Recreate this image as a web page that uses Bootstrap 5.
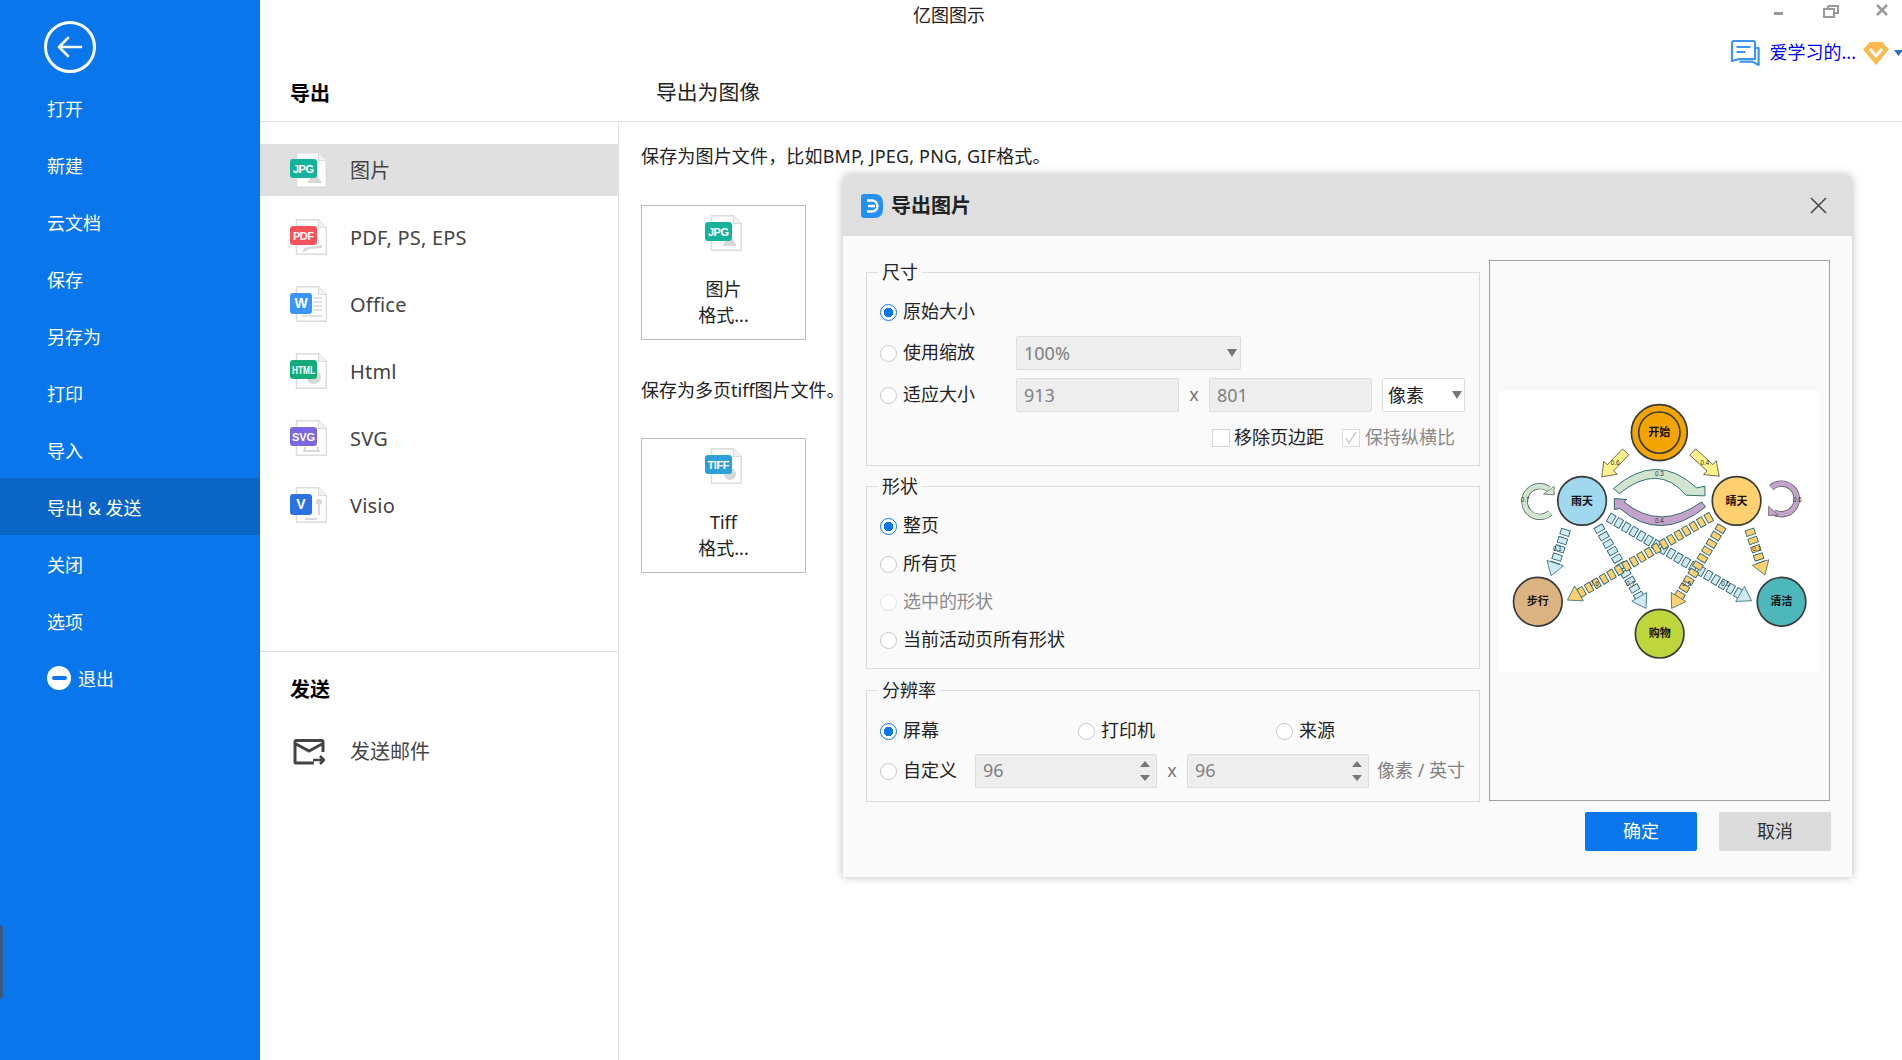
<!DOCTYPE html>
<html lang="zh-CN">
<head>
<meta charset="utf-8">
<title>亿图图示</title>
<link rel="stylesheet" href="https://cdn.jsdelivr.net/npm/bootstrap@5.3.0/dist/css/bootstrap.min.css">
<style>
html,body{height:100%;margin:0;overflow:hidden;background:#fff}
body{font-family:"Noto Sans","Noto Sans CJK SC",sans-serif;font-size:18px;color:#222;line-height:1.4}
.app-shell{position:relative;width:1902px;height:1060px;overflow:hidden}
.side-rail{width:260px;flex:0 0 260px;background:#0a76eb;color:#fff}
.back-circle{width:52px;height:52px;margin:21px 0 6px 44px;border:3px solid #fff;border-radius:50%}
.rail-item{height:57px;padding:5px 0 0 47px;font-size:18px}
.rail-item.is-on{background:#0965c6}
.exit-dot{width:24px;height:24px;border-radius:50%;background:#fff;margin-right:7px;margin-top:-5px}
.exit-dot::after{content:"";width:15px;height:4px;background:#0a76eb;border-radius:2px}
.edge-tab{position:absolute;left:-3px;top:925px;width:6px;height:74px;border:3px solid #3a5a82;border-radius:4px}
.main-pane{flex:1 1 auto;min-width:0}
.head-band{height:122px;border-bottom:1px solid #e0e0e0}
.win-row{height:30px}
.app-title{margin-left:653px;line-height:30px;font-size:18px;color:#222}
.win-ctl{position:absolute;top:0;right:0;width:140px;height:24px}
.user-row{height:40px;padding-top:6px;font-size:18px;color:#0000f0}
.user-name{margin:0 6px 0 10px}
.user-caret{margin-right:-2px}
.crumb-row{height:47px}
.crumb-a{width:396px;padding-left:30px;font-size:20px;font-weight:700;color:#000}
.crumb-b{font-size:20.8px;color:#222;margin-top:-2px}
.body-row{height:938px}
.kind-col{width:359px;flex:0 0 359px;border-right:1px solid #e0e0e0;padding-top:22px}
.kind-row{height:52px;margin-bottom:15px;padding-left:30px;font-size:20px;color:#444}
.kind-row.is-on{background:#e0e0e0}
.kind-ico{width:37px;height:36px;margin-right:23px;flex:none}
.kind-cap{padding-top:2px;letter-spacing:.2px}
.kind-rule{border-top:1px solid #e0e0e0;margin-top:120px}
.send-head{padding:24px 0 0 30px;font-size:20px;font-weight:700;color:#000;margin-bottom:28px}
.mail-row{height:40px;padding-left:33px;font-size:20px;color:#444}
.mail-ico{width:32px;height:26px;margin-right:25px;flex:none}
.out-col{padding:21px 0 0 22px;font-size:18px;color:#222}
.out-line{height:26px;line-height:26px;white-space:nowrap}
.out-wide{letter-spacing:.17px}
.fmt-box{width:165px;height:135px;margin-top:36px;border:1px solid #bdbdbd;background:#fff;padding-top:9px;font-size:18px;line-height:26px;color:#222}
.fmt-box svg{width:37px;height:36px;margin-bottom:25px}
.gap-line{margin-top:37px}
.gap-box{margin-top:35px}
.dlg-win{position:absolute;left:843px;top:175px;width:1009px;height:702px;background:#fafafa;border-radius:6px 6px 0 0;box-shadow:0 0 10px rgba(0,0,0,.28);font-size:18px;color:#222}
.dlg-head{height:61px;background:#dfdfdf;border-radius:6px 6px 0 0;padding:0 25px 0 18px;font-size:20px;font-weight:700;color:#222}
.dlg-head svg.ic-a{width:22px;height:24px;margin-right:8px}
.dlg-close{margin-left:auto;width:17px;height:17px}
.dlg-main{padding:23px 22px 0 23px}
.dlg-fields{width:614px;flex:none}
.fs-box{border:1px solid #dcdcdc;margin:0;padding:0 0 0 10px}
.fs-box legend{float:none;width:auto;margin:0 0 0 1px;padding:0 4px;font-size:18px;line-height:26px;color:#222}
.fs-two{margin-top:7px}
.fs-three{margin-top:8px}
.fs-row{height:34px;white-space:nowrap}
.r-1{margin-top:10px}
.r-g7{margin-top:7px}
.r-g8{margin-top:8px}
.r-g9{margin-top:9px}
.fs-two .fs-row{height:32px;margin-top:6px}
.fs-two .r-1{margin-top:11px}
.fs-three .r-1{margin-top:11px}
.fs-three .r-g7{margin-top:6px}
.fs-pad{height:12px}
.fs-pad10{height:10px}
.fs-pad15{height:13px}
.form-check-input.pick{width:17px;height:17px;margin:0 5px 0 3px;flex:none;border:1.5px solid #c8c8c8;background-color:#fff}
.form-check-input.pick:checked{background-color:#fff;border-color:#0a76eb;background-image:radial-gradient(circle,#0a76eb 0 4.5px,#fff 5px)}
.form-check-input.pick:disabled{opacity:1;border-color:#e2e2e2}
.pick-label{font-size:18px;color:#222;margin-left:1px}
.pick-label.is-off{color:#8a8a8a}
.fld-a{width:139px;flex:none}
.form-select.sel-off,.form-control.txt-off{background-color:#eee;border:1px solid #ddd;border-radius:2px;height:34px;padding:0 7px;font-size:18px;color:#808080;font-family:inherit;opacity:1}
.form-select.sel-off{width:225px;background-position:right 1px center;background-size:14px 10px}
.form-select.sel-lite{width:83px;height:34px;margin-left:10px;border-radius:2px;background-color:#fff;background-position:right 0 center;background-size:14px 10px;border:1px solid #ddd;padding:0 5px;font-size:18px;color:#222;font-family:inherit}
.caret-svg{background-image:url("data:image/svg+xml,%3Csvg xmlns='http://www.w3.org/2000/svg' viewBox='0 0 14 10'%3E%3Cpath fill='%23777' d='M2 1h10L7 9z'/%3E%3C/svg%3E")}
.form-control.w-size{width:163px}
.times-x{width:30px;text-align:center;color:#777}
.check-row{padding-left:335px;height:34px}
.sq-box{width:18px;height:18px;flex:none;border:1px solid #d4d4d4;background:#fff;margin-right:4px}
.sq-box.is-off{margin-left:18px;margin-right:5px;border-color:#ddd}
.col-198{width:198px;flex:none}
.spin-lead{width:98px;flex:none}
.spin-box{width:182px;height:34px;background:#eee;border:1px solid #ddd;border-radius:2px;padding:0 5px 0 7px;font-size:18px;color:#808080;flex:none}
.spin-box svg{width:12px;height:26px}
.unit-txt{margin-left:8px;color:#808080;font-size:18px}
.thumb-box{width:341px;height:541px;margin:1px 0 0 9px;border:1px solid #a0a0a0;background:#fafafa;flex:none}
.thumb-art{width:321px;height:281px;margin:130px 0 0 9px;background:#fff;display:block}
.dlg-foot{padding:10px 21px 0 0;gap:22px}
.btn.act-ok,.btn.act-no{width:112px;height:39px;padding:0;border:0;border-radius:2px;font-size:18px;line-height:39px}
.btn.act-ok{background:#0a76eb;color:#fff}
.btn.act-no{background:#dcdcdc;color:#333}
.node-t{font-family:"Noto Sans CJK SC",sans-serif;font-size:33px;font-weight:700;text-anchor:middle;fill:#111}
.edge-t{font-family:"Liberation Sans",sans-serif;font-size:19px;text-anchor:middle;fill:#333}
.bdg{font-family:"Liberation Sans",sans-serif;font-weight:700;fill:#fff;font-size:11px;text-anchor:middle}
.bdg-big{font-size:14px}
.seg-line{stroke:#1f6068;stroke-width:30;stroke-dasharray:20 6}
.seg-blue,.seg-gold{stroke-width:25;stroke-dasharray:15 11;stroke-dashoffset:-2.500}
.seg-blue{stroke:#cfeaf5}
.seg-gold{stroke:#ffd070}
</style>
</head>
<body>
<svg width="0" height="0" class="position-absolute">
  <defs>
    <symbol id="doc-sheet" viewBox="0 0 37 36">
      <path d="M6.500.7H28.500L36.300 8.500V35.300H6.500Z" fill="#fff" stroke="#dcdcdc" stroke-width="1.400"/>
      <path d="M28.500.7V8.500H36.300" fill="#f2f2f2" stroke="#dcdcdc" stroke-width="1.200"/>
    </symbol>
  </defs>
</svg>
<div class="app-shell d-flex">
  <aside class="side-rail d-flex flex-column">
    <div class="back-circle d-flex align-items-center justify-content-center">
      <svg width="26" height="22" viewBox="0 0 26 22" fill="none" stroke="#fff" stroke-width="2.600" stroke-linecap="round" stroke-linejoin="round"><path d="M11 2 2 11l9 9M2.500 11H24"/></svg>
    </div>
    <div class="rail-item d-flex align-items-center">打开</div>
    <div class="rail-item d-flex align-items-center">新建</div>
    <div class="rail-item d-flex align-items-center">云文档</div>
    <div class="rail-item d-flex align-items-center">保存</div>
    <div class="rail-item d-flex align-items-center">另存为</div>
    <div class="rail-item d-flex align-items-center">打印</div>
    <div class="rail-item d-flex align-items-center">导入</div>
    <div class="rail-item is-on d-flex align-items-center">导出 &amp; 发送</div>
    <div class="rail-item d-flex align-items-center">关闭</div>
    <div class="rail-item d-flex align-items-center">选项</div>
    <div class="rail-item d-flex align-items-center"><span class="exit-dot d-flex align-items-center justify-content-center"></span>退出</div>
  </aside>
  <div class="edge-tab"></div>
  <div class="main-pane d-flex flex-column">
    <div class="head-band">
      <div class="win-row position-relative d-flex">
        <div class="app-title">亿图图示</div>
        <svg class="win-ctl" viewBox="0 0 140 24" fill="none" stroke="#9a9a9a">
          <path d="M12 13.500h9" stroke-width="3"/>
          <path d="M66 6h10v7h-3M66 6v3" stroke-width="2"/>
          <rect x="62" y="9" width="10" height="8" stroke-width="2"/>
          <path d="M115 5l10 10M125 5l-10 10" stroke-width="2.600"/>
        </svg>
      </div>
      <div class="user-row d-flex align-items-center justify-content-end">
        <svg width="30" height="27" viewBox="0 0 30 27" fill="none" stroke="#3c96ef" stroke-width="2.200" stroke-linejoin="round"><path d="M2 3q0-2 2-2h19q2 0 2 2v16H9l-7 2z"/><path d="M6.500 7h14M6.500 12h9" /><path d="M26 8h2.600v17l-6-3.400H9.500" /></svg>
        <span class="user-name">爱学习的...</span>
        <svg width="28" height="25" viewBox="0 0 28 25"><path d="M8 1h12l7 7.500L14 24 1 8.500z" fill="#fcb94d"/><path d="M8 8l6 7 6-7" fill="none" stroke="#fff" stroke-width="3"/></svg>
        <svg width="10" height="8" viewBox="0 0 10 8" class="ms-1 user-caret"><path d="M0 1h9L4.500 7z" fill="#2a6fc0"/></svg>
      </div>
      <div class="crumb-row d-flex align-items-center">
        <div class="crumb-a">导出</div>
        <div class="crumb-b">导出为图像</div>
      </div>
    </div>
    <div class="body-row d-flex">
      <div class="kind-col">
        <div class="kind-row is-on d-flex align-items-center">
          <svg class="kind-ico" viewBox="0 0 37 36"><use href="#doc-sheet"/><path d="M17 31l8-11 7 11z" fill="#d8d8d8"/><rect y="7" width="27" height="19" rx="3" fill="#17b29c"/><text class="bdg" x="13.500" y="21" textLength="21">JPG</text></svg>
          <span class="kind-cap">图片</span>
        </div>
        <div class="kind-row d-flex align-items-center">
          <svg class="kind-ico" viewBox="0 0 37 36"><use href="#doc-sheet"/><path d="M12 33q2-5 6-5l14-2v3l-13 1q-3 3-7 3z" fill="#d8d8d8"/><rect y="7" width="27" height="19" rx="3" fill="#f9525a"/><text class="bdg" x="13.500" y="21" textLength="21">PDF</text></svg>
          <span class="kind-cap">PDF, PS, EPS</span>
        </div>
        <div class="kind-row d-flex align-items-center">
          <svg class="kind-ico" viewBox="0 0 37 36"><use href="#doc-sheet"/><path d="M23 12h9M23 16h9M23 20h9M23 24h9M12 30h20" stroke="#d8d8d8" stroke-width="1.400"/><rect y="7" width="22" height="21" rx="3" fill="#3b96fb"/><text class="bdg bdg-big" x="11" y="22">W</text></svg>
          <span class="kind-cap">Office</span>
        </div>
        <div class="kind-row d-flex align-items-center">
          <svg class="kind-ico" viewBox="0 0 37 36"><use href="#doc-sheet"/><circle cx="24" cy="24" r="7" fill="#d8d8d8"/><rect y="7" width="27" height="19" rx="3" fill="#17a97c"/><text class="bdg" x="13.500" y="21" textLength="23" lengthAdjust="spacingAndGlyphs">HTML</text></svg>
          <span class="kind-cap">Html</span>
        </div>
        <div class="kind-row d-flex align-items-center">
          <svg class="kind-ico" viewBox="0 0 37 36"><use href="#doc-sheet"/><path d="M13 31h17M15 27v4M28 27v4" stroke="#d8d8d8" stroke-width="2" fill="none"/><rect y="7" width="27" height="19" rx="3" fill="#7b68e0"/><text class="bdg" x="13.500" y="21" textLength="23">SVG</text></svg>
          <span class="kind-cap">SVG</span>
        </div>
        <div class="kind-row d-flex align-items-center">
          <svg class="kind-ico" viewBox="0 0 37 36"><use href="#doc-sheet"/><path d="M29 16v12M15 32h12" stroke="#d8d8d8" stroke-width="2"/><circle cx="29" cy="15" r="3" fill="#d8d8d8"/><rect y="7" width="22" height="21" rx="3" fill="#2a72e0"/><text class="bdg bdg-big" x="11" y="22">V</text></svg>
          <span class="kind-cap">Visio</span>
        </div>
        <div class="kind-rule"></div>
        <div class="send-head">发送</div>
        <div class="mail-row d-flex align-items-center">
          <svg class="mail-ico" viewBox="0 0 32 26" fill="none" stroke="#444" stroke-width="3"><path d="M30 13V3q0-1.500-1.500-1.500h-25Q2 1.500 2 3v20q0 1 1 1h18M3 5l13 7L29 5"/><path d="M20 21h11M27 17l4 4-4 4" stroke-width="2.600"/></svg>
          发送邮件
        </div>
      </div>
      <div class="out-col">
        <div class="out-line out-wide">保存为图片文件，比如BMP, JPEG, PNG, GIF格式。</div>
        <div class="fmt-box text-center">
          <svg viewBox="0 0 37 36" class="d-block mx-auto"><use href="#doc-sheet"/><path d="M17 31l8-11 7 11z" fill="#d8d8d8"/><rect y="7" width="27" height="19" rx="3" fill="#17b29c"/><text class="bdg" x="13.500" y="21" textLength="21">JPG</text></svg>
          图片<br>格式...
        </div>
        <div class="out-line gap-line">保存为多页tiff图片文件。</div>
        <div class="fmt-box gap-box text-center">
          <svg viewBox="0 0 37 36" class="d-block mx-auto"><use href="#doc-sheet"/><circle cx="25" cy="26" r="6" fill="#d8d8d8"/><rect y="7" width="27" height="19" rx="3" fill="#2f9fd8"/><text class="bdg" x="13.500" y="21" textLength="22">TIFF</text></svg>
          Tiff<br>格式...
        </div>
      </div>
    </div>
  </div>

  <section class="dlg-win d-flex flex-column">
    <div class="dlg-head d-flex align-items-center">
      <svg class="ic-a" viewBox="0 0 22 24"><path d="M3 0h10q9 0 9 9v6q0 9-9 9H3q-3 0-3-3V3q0-3 3-3z" fill="#2490f5"/><path d="M6 6.500h5a5.500 5.500 0 0 1 0 11H6M7 12h7" fill="none" stroke="#fff" stroke-width="2.400"/></svg>
      导出图片
      <svg class="dlg-close" viewBox="0 0 17 17" fill="none" stroke="#444" stroke-width="1.500"><path d="M1 1l15 15M16 1 1 16"/></svg>
    </div>
    <div class="dlg-main d-flex">
      <div class="dlg-fields">
        <fieldset class="fs-box">
          <legend>尺寸</legend>
          <div class="fs-row r-1 d-flex align-items-center"><input class="form-check-input pick" type="radio" name="a" checked><span class="pick-label">原始大小</span></div>
          <div class="fs-row r-g7 d-flex align-items-center"><span class="fld-a d-flex align-items-center"><input class="form-check-input pick" type="radio" name="a"><span class="pick-label">使用缩放</span></span>
            <select class="form-select sel-off caret-svg" disabled><option>100%</option></select></div>
          <div class="fs-row r-g8 d-flex align-items-center"><span class="fld-a d-flex align-items-center"><input class="form-check-input pick" type="radio" name="a"><span class="pick-label">适应大小</span></span>
            <input class="form-control txt-off w-size" type="text" value="913" disabled><span class="times-x">x</span><input class="form-control txt-off w-size" type="text" value="801" disabled>
            <select class="form-select sel-lite caret-svg"><option>像素</option></select></div>
          <div class="check-row r-g9 d-flex align-items-center"><span class="sq-box"></span><span>移除页边距</span>
            <span class="sq-box is-off d-flex align-items-center justify-content-center"><svg width="14" height="14" viewBox="0 0 14 14" fill="none" stroke="#cfcfcf" stroke-width="1.500"><path d="M2 7l3 5 7-11"/></svg></span><span class="pick-label is-off m-0">保持纵横比</span></div>
          <div class="fs-pad10"></div>
        </fieldset>
        <fieldset class="fs-box fs-two">
          <legend>形状</legend>
          <div class="fs-row r-1 d-flex align-items-center"><input class="form-check-input pick" type="radio" name="b" checked><span class="pick-label">整页</span></div>
          <div class="fs-row d-flex align-items-center"><input class="form-check-input pick" type="radio" name="b"><span class="pick-label">所有页</span></div>
          <div class="fs-row d-flex align-items-center"><input class="form-check-input pick" type="radio" name="b" disabled><span class="pick-label is-off">选中的形状</span></div>
          <div class="fs-row d-flex align-items-center"><input class="form-check-input pick" type="radio" name="b"><span class="pick-label">当前活动页所有形状</span></div>
          <div class="fs-pad"></div>
        </fieldset>
        <fieldset class="fs-box fs-three">
          <legend>分辨率</legend>
          <div class="fs-row r-1 d-flex align-items-center">
            <span class="col-198 d-flex align-items-center"><input class="form-check-input pick" type="radio" name="c" checked><span class="pick-label">屏幕</span></span>
            <span class="col-198 d-flex align-items-center"><input class="form-check-input pick" type="radio" name="c"><span class="pick-label">打印机</span></span>
            <span class="col-198 d-flex align-items-center"><input class="form-check-input pick" type="radio" name="c"><span class="pick-label">来源</span></span>
          </div>
          <div class="fs-row r-g7 d-flex align-items-center">
            <span class="spin-lead d-flex align-items-center"><input class="form-check-input pick" type="radio" name="c"><span class="pick-label">自定义</span></span>
            <span class="spin-box d-flex align-items-center justify-content-between">96<svg viewBox="0 0 12 26"><path d="M6 3l5 6H1zM6 23l5-6H1z" fill="#777"/></svg></span>
            <span class="times-x">x</span>
            <span class="spin-box d-flex align-items-center justify-content-between">96<svg viewBox="0 0 12 26"><path d="M6 3l5 6H1zM6 23l5-6H1z" fill="#777"/></svg></span>
            <span class="unit-txt">像素 / 英寸</span>
          </div>
          <div class="fs-pad15"></div>
        </fieldset>
      </div>
      <div class="thumb-box">
        <svg class="thumb-art" viewBox="57 32 963 844">
          <g transform="translate(365 290) rotate(133.800)"><polygon points="-104,-13 -38,-13 -38,-28 0,0 -38,28 -38,13 -104,13" fill="#fff28a" stroke="#333" stroke-width="2"/></g>
          <g transform="translate(718 288) rotate(42.400)"><polygon points="-108,-13 -38,-13 -38,-28 0,0 -38,28 -38,13 -108,13" fill="#fff28a" stroke="#333" stroke-width="2"/></g>
          <path d="M400 325Q530 211 650 323L675 318V347L618 345Q535 246 418 340Z" fill="#cfe5cf" stroke="#155555" stroke-width="2.500"/>
          <path d="M677 380Q540 490 420 385L403 388V355L440 358 432 365Q540 455 665 365Z" fill="#c3a3cc" stroke="#155555" stroke-width="2.500"/>
          <path d="M210 398A46 46 0 1 1 205 326" fill="none" stroke="#555" stroke-width="19"/>
          <path d="M210 398A46 46 0 1 1 205 326" fill="none" stroke="#cfe5cf" stroke-width="15"/>
          <polygon points="222,318 222,344 190,342" fill="#cfe5cf" stroke="#555" stroke-width="2"/>
          <path d="M874 322A46 46 0 1 1 882 396" fill="none" stroke="#555" stroke-width="19"/>
          <path d="M874 322A46 46 0 1 1 882 396" fill="none" stroke="#c3a3cc" stroke-width="15"/>
          <polygon points="866,378 866,406 895,405" fill="#c3a3cc" stroke="#555" stroke-width="2"/>
          <g fill="none">
            <line x1="258" y1="447" x2="225" y2="549" class="seg-line"/>
            <line x1="258" y1="447" x2="225" y2="549" class="seg-blue"/>
            <line x1="353" y1="437" x2="478" y2="650" class="seg-line"/>
            <line x1="353" y1="437" x2="478" y2="650" class="seg-blue"/>
            <line x1="385" y1="410" x2="780" y2="642" class="seg-line"/>
            <line x1="385" y1="410" x2="780" y2="642" class="seg-blue"/>
            <line x1="695" y1="408" x2="297" y2="640" class="seg-line"/>
            <line x1="695" y1="408" x2="297" y2="640" class="seg-gold"/>
            <line x1="727" y1="437" x2="596" y2="651" class="seg-line"/>
            <line x1="727" y1="437" x2="596" y2="651" class="seg-gold"/>
            <line x1="808" y1="447" x2="842" y2="547" class="seg-line"/>
            <line x1="808" y1="447" x2="842" y2="547" class="seg-gold"/>
          </g>
          <g stroke="#1f6068" stroke-width="2">
            <polygon transform="translate(213 587) rotate(107.800)" points="0,0 -40,-26 -40,26" fill="#cfeaf5"/>
            <polygon transform="translate(498 685) rotate(59.700)" points="0,0 -40,-26 -40,26" fill="#cfeaf5"/>
            <polygon transform="translate(815 662) rotate(30.400)" points="0,0 -40,-26 -40,26" fill="#cfeaf5"/>
            <polygon transform="translate(262 660) rotate(149.800)" points="0,0 -40,-26 -40,26" fill="#ffd070"/>
            <polygon transform="translate(575 685) rotate(121.500)" points="0,0 -40,-26 -40,26" fill="#ffd070"/>
            <polygon transform="translate(855 585) rotate(71.200)" points="0,0 -40,-26 -40,26" fill="#ffd070"/>
          </g>
          <g stroke="#3a3a3a" stroke-width="5">
            <circle cx="538" cy="157" r="84" fill="#f2a500"/>
            <circle cx="538" cy="157" r="62" fill="#f2a500"/>
            <circle cx="306" cy="362" r="73" fill="#a0d8ef"/>
            <circle cx="770" cy="362" r="73" fill="#ffd070"/>
            <circle cx="173" cy="665" r="73" fill="#dcb482"/>
            <circle cx="905" cy="665" r="73" fill="#4db8bc"/>
            <circle cx="539" cy="761" r="73" fill="#bed63c"/>
          </g>
          <text class="node-t" x="538" y="168">开始</text>
          <text class="node-t" x="306" y="373">雨天</text>
          <text class="node-t" x="770" y="373">晴天</text>
          <text class="node-t" x="173" y="676">步行</text>
          <text class="node-t" x="905" y="676">清洁</text>
          <text class="node-t" x="539" y="772">购物</text>
          <text class="edge-t" x="405" y="255">0.6</text>
          <text class="edge-t" x="675" y="255">0.4</text>
          <text class="edge-t" x="538" y="288">0.3</text>
          <text class="edge-t" x="538" y="428">0.4</text>
          <text class="edge-t" x="135" y="365">0.7</text>
          <text class="edge-t" x="953" y="365">0.6</text>
          <text class="edge-t" x="232" y="512">0.1</text>
          <text class="edge-t" x="452" y="617">0.7</text>
          <text class="edge-t" x="737" y="617">0.5</text>
          <text class="edge-t" x="343" y="619">0.6</text>
          <text class="edge-t" x="620" y="617">0.5</text>
          <text class="edge-t" x="830" y="512">0.1</text>
        </svg>
      </div>
    </div>
    <div class="dlg-foot d-flex justify-content-end">
      <button class="btn act-ok" type="button">确定</button>
      <button class="btn act-no" type="button">取消</button>
    </div>
  </section>
</div>
<script src="https://cdn.jsdelivr.net/npm/bootstrap@5.3.0/dist/js/bootstrap.bundle.min.js"></script>
</body>
</html>
